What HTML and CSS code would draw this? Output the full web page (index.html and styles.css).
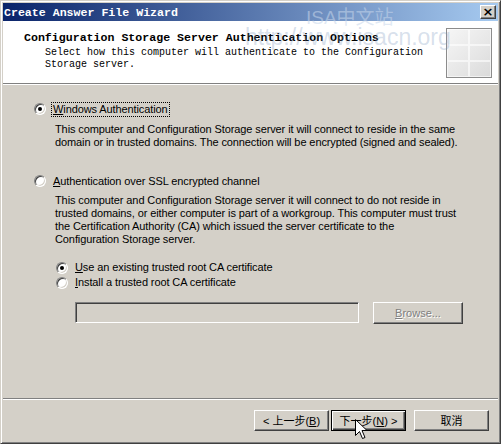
FILE: index.html
```html
<!DOCTYPE html>
<html lang="en">
<head>
    <meta charset="UTF-8">
    <title>Create Answer File Wizard</title>
    <link rel="stylesheet" href="styles.css">
</head>
<body>
    <div class="window">
        <header class="titlebar">
            <span class="title">Create Answer File Wizard</span>
            <button class="close-btn">&times;</button>
        </header>
        <section class="banner">
            <div class="banner-text">
                <h1>Configuration Storage Server Authentication Options</h1>
                <p>Select how this computer will authenticate to the Configuration<br>Storage server.</p>
            </div>
            <div class="banner-img">
                <div class="tile"></div><div class="tile"></div><div class="tile"></div>
                <div class="tile"></div><div class="tile"></div><div class="tile"></div>
            </div>
        </section>
        <main class="content">
            <div class="option">
                <span class="radio checked"></span>
                <span class="label focused"><u>W</u>indows Authentication</span>
            </div>
            <p class="desc">This computer and Configuration Storage server it will connect to reside in the same<br>domain or in trusted domains. The connection will be encrypted (signed and sealed).</p>

            <div class="option option-ssl">
                <span class="radio"></span>
                <span class="label"><u>A</u>uthentication over SSL encrypted channel</span>
            </div>
            <p class="desc desc-ssl">This computer and Configuration Storage server it will connect to do not reside in<br>trusted domains, or either computer is part of a workgroup. This computer must trust<br>the Certification Authority (CA) which issued the server certificate to the<br>Configuration Storage server.</p>

            <div class="sub-options">
                <div class="option sub">
                    <span class="radio checked"></span>
                    <span class="label"><u>U</u>se an existing trusted root CA certificate</span>
                </div>
                <div class="option sub">
                    <span class="radio"></span>
                    <span class="label"><u>I</u>nstall a trusted root CA certificate</span>
                </div>
                <div class="file-row">
                    <div class="textbox"></div>
                    <button class="btn disabled"><u>B</u>rowse...</button>
                </div>
            </div>
        </main>
        <footer class="footer">
            <button class="btn">&lt; 上一步(<u>B</u>)</button>
            <button class="btn default">下一步(<u>N</u>) &gt;</button>
            <button class="btn cancel">取消</button>
        </footer>

        <div class="watermark wm-top">ISA中文站</div>
        <div class="watermark wm-url">http://www.isacn.org</div>
        <svg class="cursor" width="13" height="22" viewBox="0 0 13 22">
            <path d="M0.5 0.5 L0.5 16.5 L4.5 12.5 L7.5 19.5 L10 18.5 L7 11.5 L12 11.5 Z" fill="#fff" stroke="#000" stroke-width="1"/>
        </svg>
    </div>
</body>
</html>
```

FILE: styles.css
```css
body {
    margin: 0;
    padding: 0;
    width: 501px;
    height: 444px;
    overflow: hidden;
    background: #d4d0c8;
}
.window {
    position: relative;
    box-sizing: border-box;
    width: 501px;
    height: 444px;
    display: flex;
    flex-direction: column;
    background: #d4d0c8;
    border: 1px solid;
    border-color: #d4d0c8 #404040 #404040 #d4d0c8;
    box-shadow: inset 1px 1px #fff, inset -1px -1px #808080;
    padding: 2px;
    font-family: "Liberation Sans", Arial, sans-serif;
    font-size: 11px;
    letter-spacing: -0.1px;
    color: #000;
}
.titlebar {
    height: 18px;
    flex-shrink: 0;
    display: flex;
    align-items: center;
    justify-content: space-between;
    padding: 0 2px 0 1px;
    background: linear-gradient(to right, #0a246a, #a6caf0);
}
.title {
    font-family: "Liberation Mono", "Courier New", monospace;
    font-weight: bold;
    font-size: 11.6px;
    letter-spacing: 0;
    color: #fff;
}
.close-btn {
    width: 16px;
    height: 14px;
    padding: 0;
    margin: 0;
    background: #d4d0c8;
    border: 1px solid;
    border-color: #fff #404040 #404040 #fff;
    box-shadow: inset -1px -1px #808080;
    font-family: "DejaVu Sans", sans-serif;
    font-size: 13px;
    font-weight: bold;
    line-height: 10px;
    color: #000;
}
.banner {
    height: 62px;
    flex-shrink: 0;
    display: flex;
    justify-content: space-between;
    background: #fff;
    border-bottom: 1px solid #808080;
    box-shadow: 0 1px #fff;
    letter-spacing: 0;
}
.banner-text {
    padding: 10px 0 0 21px;
}
.banner h1 {
    margin: 0;
    font-family: "Liberation Mono", "Courier New", monospace;
    font-weight: bold;
    font-size: 11.6px;
    line-height: 14px;
}
.banner p {
    margin: 2px 0 0 21px;
    font-family: "Liberation Mono", "Courier New", monospace;
    font-size: 10px;
    line-height: 12px;
}
.banner-img {
    width: 44px;
    height: 48px;
    margin: 7px 6px 0 0;
    border: 1px solid #8c8c8c;
    background: linear-gradient(135deg, #f6f6f6, #e6e6e6 60%, #dadada);
    display: grid;
    grid-template-columns: 1fr 1fr;
    grid-template-rows: 1fr 1fr 1fr;
}
.tile {
    border: 1px solid rgba(255, 255, 255, 0.6);
}
.content {
    flex-grow: 1;
    padding: 17px 0 0 31px;
    border-bottom: 1px solid #808080;
    box-shadow: 0 1px #fff;
}
.option {
    height: 16px;
    display: flex;
    align-items: center;
    gap: 5px;
}
.option-ssl {
    margin-top: 24px;
}
.radio {
    position: relative;
    box-sizing: border-box;
    width: 12px;
    height: 12px;
    border-radius: 50%;
    background: #fff;
    border: 1px solid;
    border-color: #808080 #fff #fff #808080;
    box-shadow: inset 1px 1px #404040, inset -1px -1px #d4d0c8;
}
.radio.checked::after {
    content: "";
    position: absolute;
    left: 3px;
    top: 3px;
    width: 4px;
    height: 4px;
    border-radius: 50%;
    background: #000;
}
.label {
    padding: 0 1px;
    border: 1px dotted transparent;
    line-height: 13px;
}
.label.focused {
    border-color: #000;
}
.desc {
    margin: 6px 0 0 21px;
    line-height: 13px;
}
.desc-ssl {
    margin-top: 5px;
}
.sub-options {
    margin: 14px 0 0 22px;
}
.option.sub {
    height: 15px;
}
.file-row {
    display: flex;
    gap: 14px;
    margin: 12px 0 0 19px;
}
.textbox {
    box-sizing: border-box;
    width: 284px;
    height: 21px;
    border: 1px solid;
    border-color: #808080 #fff #fff #808080;
    box-shadow: inset 1px 1px #404040, inset -1px -1px #d4d0c8;
}
.btn {
    box-sizing: border-box;
    width: 75px;
    height: 21px;
    padding: 0;
    background: #d4d0c8;
    border: 1px solid;
    border-color: #fff #404040 #404040 #fff;
    box-shadow: inset -1px -1px #808080;
    font-family: "Liberation Sans", "Noto Sans CJK SC", sans-serif;
    font-size: 11px;
    color: #000;
}
.btn.disabled {
    width: 90px;
    height: 22px;
    color: #808080;
    text-shadow: 1px 1px #fff;
}
.footer {
    height: 42px;
    flex-shrink: 0;
    display: flex;
    align-items: center;
    padding: 0 9px 0 251px;
}
.btn.default {
    margin-left: 2px;
    border: 1px solid #000;
    box-shadow: inset 1px 1px #fff, inset -1px -1px #404040, inset -2px -2px #808080;
}
.btn.cancel {
    margin-left: auto;
}
.watermark {
    position: absolute;
    font-family: "Liberation Sans", "Noto Sans CJK SC", sans-serif;
    letter-spacing: 0;
    pointer-events: none;
}
.wm-top {
    left: 305px;
    top: 1px;
    font-size: 19px;
    color: rgba(200, 215, 235, 0.55);
}
.wm-url {
    left: 244px;
    top: 23px;
    font-size: 23px;
    color: rgba(120, 150, 190, 0.3);
}
.cursor {
    position: absolute;
    left: 354px;
    top: 418px;
}
```
